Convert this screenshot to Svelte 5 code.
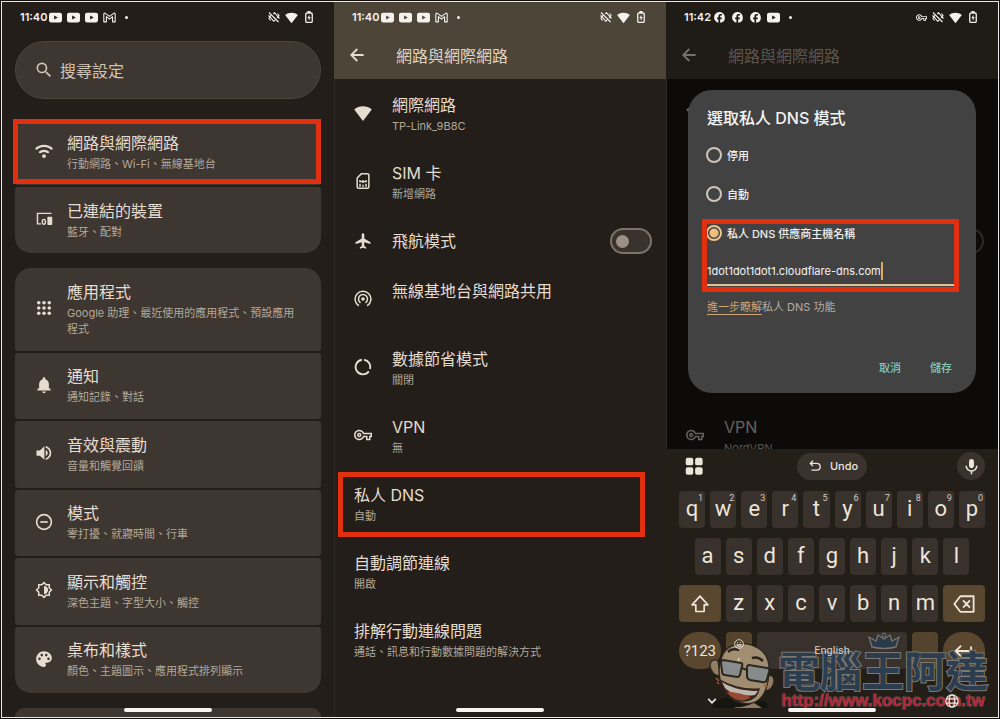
<script>
  const icons = {
    search: '<path d="M15.5 14h-.79l-.28-.27A6.47 6.47 0 0 0 16 9.5 6.5 6.5 0 1 0 9.5 16c1.61 0 3.09-.59 4.23-1.57l.27.28v.79l5 4.99L20.49 19l-4.99-5zm-6 0a4.5 4.5 0 1 1 0-9 4.5 4.5 0 0 1 0 9z"/>',
    wifiArcs: '<g fill="none" stroke="currentColor" stroke-width="2.8"><path d="M1 9.800a15.500 15.500 0 0 1 22 0"/><path d="M5.600 14.400a9.200 9.200 0 0 1 12.800 0"/></g><circle cx="12" cy="18.800" r="2.600"/>',
    devices: '<g fill="none" stroke="currentColor" stroke-width="1.900"><path d="M22 4.500H3.300V18.500H8"/><rect x="9.800" y="12.500" width="4" height="6.600" rx="2"/></g><rect x="16.500" y="9" width="6.500" height="11" rx="1"/>',
    apps: '<circle cx="5" cy="5" r="2.400"/><circle cx="12" cy="5" r="2.400"/><circle cx="19" cy="5" r="2.400"/><circle cx="5" cy="12" r="2.400"/><circle cx="12" cy="12" r="2.400"/><circle cx="19" cy="12" r="2.400"/><circle cx="5" cy="19" r="2.400"/><circle cx="12" cy="19" r="2.400"/><circle cx="19" cy="19" r="2.400"/>',
    bell: '<path d="M12 23c1.300 0 2.300-1 2.300-2.200H9.700C9.700 22 10.700 23 12 23zm6.500-6.500V11c0-3.300-1.800-6-4.700-6.800V3.500C13.800 2.500 13 1.800 12 1.800s-1.800.7-1.800 1.700v.7C7.300 5 5.500 7.700 5.500 11v5.500H3.300v2.700h17.400v-2.700z"/>',
    volume: '<path d="M2 8.500v7h4.500l6 5.500V3l-6 5.500zm15 3.500c0-1.800-1-3.300-2.700-4v8c1.600-.7 2.700-2.200 2.700-4zM14.300 2.700v2.300c3 .9 5.200 3.700 5.200 7s-2.200 6.100-5.200 7v2.300c4.200-1 7.400-4.700 7.400-9.300s-3.200-8.300-7.400-9.300z"/>',
    modes: '<circle cx="12" cy="12" r="9.800" fill="none" stroke="currentColor" stroke-width="2.200"/><path d="M7 10.900h10v2.200H7z"/>',
    display: '<path d="M20 8.690V4h-4.690L12 .69 8.690 4H4v4.690L.69 12 4 15.310V20h4.690L12 23.310 15.310 20H20v-4.690L23.310 12 20 8.690zm-2 5.790V18h-3.520L12 20.480 9.520 18H6v-3.520L3.520 12 6 9.520V6h3.520L12 3.520 14.480 6H18v3.520L20.480 12 18 14.480zM12 6.500v11a5.500 5.500 0 0 0 0-11z"/>',
    palette: '<path fill-rule="evenodd" d="M12 1.500C6.200 1.500 1.500 6.200 1.500 12S6.200 22.500 12 22.500c1.400 0 2.600-1.100 2.600-2.600 0-.7-.3-1.300-.7-1.700v-.4c0-.4.300-.8.700-.8H16.300c3.500 0 6.200-2.800 6.200-6.200 0-5.100-4.700-9.300-10.500-9.300zM6 13.500a1.700 1.700 0 1 1 0-3.400 1.700 1.700 0 0 1 0 3.400zM9 8.500a1.700 1.700 0 1 1 0-3.400 1.700 1.700 0 0 1 0 3.400zM15 8.500a1.700 1.700 0 1 1 0-3.400 1.700 1.700 0 0 1 0 3.400zM18 13.500a1.700 1.700 0 1 1 0-3.400 1.700 1.700 0 0 1 0 3.400z"/>',
    wifi: '<path d="M12 22.500.3 7.300C3.500 4.600 7.500 3 12 3s8.500 1.600 11.700 4.300z"/>',
    sim: '<path d="M10 2.200 4.200 8v11.800c0 1.100.8 1.900 1.900 1.900h11.800c1.100 0 1.900-.8 1.900-1.900V4.100c0-1.100-.8-1.900-1.900-1.900z" fill="none" stroke="currentColor" stroke-width="2"/><path d="M7 10.500h2v3H7zM7 15.500h2v4H7zM11 10.500h2v4h-2zM11 17h2v2.500h-2zM15 10.500h2v3h-2zM15 15.500h2v4h-2zM9 12h6v1.500H9z"/>',
    plane: '<path d="M22 16v-2.200l-8.300-5V3.300c0-1-.8-1.800-1.700-1.800s-1.700.8-1.700 1.800v5.500l-8.300 5V16l8.300-2.500v5.200l-2.500 1.700v1.800L12 21l4.200 1.200v-1.800l-2.500-1.700v-5.200z"/>',
    hotspot: '<g fill="none" stroke="currentColor" stroke-width="2"><path d="M6.500 21a10.500 10.500 0 1 1 11 0"/><path d="M8.700 17a6 6 0 1 1 6.600 0"/></g><circle cx="12" cy="12" r="2.400"/>',
    saver: '<g fill="none" stroke="currentColor" stroke-width="2.500"><path d="M13.500 2.300a9.800 9.800 0 0 1 7.800 12.500"/><path d="M19.800 17.900a9.800 9.800 0 1 1-9.300-15.600"/></g>',
    key: '<path d="M22 19h-6v-4h-2.680C12.180 17.420 9.720 19 7 19c-3.860 0-7-3.140-7-7s3.140-7 7-7c2.720 0 5.170 1.580 6.320 4H24v6h-2zm-4-2h2v-4h2v-2H11.940l-.23-.67C11.010 8.340 9.110 7 7 7c-2.760 0-5 2.240-5 5s2.240 5 5 5c2.110 0 4.010-1.340 4.710-3.330l.23-.67H18zM7 15c-1.650 0-3-1.350-3-3s1.350-3 3-3 3 1.350 3 3-1.350 3-3 3zm0-4c-.55 0-1 .45-1 1s.45 1 1 1 1-.45 1-1-.45-1-1-1z"/>',
    back: '<path d="M22 10.600H6.800l6.600-6.600L11.500 2 1.500 12l10 10 1.900-2-6.600-6.600H22z"/>',
    youtube: '<path fill-rule="evenodd" d="M4 3h16c2.300 0 4 1.600 4 4v10c0 2.400-1.700 4-4 4H4c-2.300 0-4-1.600-4-4V7c0-2.400 1.700-4 4-4zm5.500 5.200v7.600l6.800-3.800z"/>',
    gmail: '<path fill="none" stroke="currentColor" stroke-width="2" stroke-linejoin="round" d="M1.500 20V5.500c0-1.500 1.700-2 2.800-1.200L12 10l7.700-5.700c1.100-.8 2.800-.3 2.800 1.200V20h-4.800v-9.500L12 15l-5.700-4.500V20z"/>',
    facebook: '<path transform="translate(2 2) scale(.83)" d="M24 12a12 12 0 1 0-14.400 11.800v-8H6.700V12h2.900v-2.300c0-3.700 1.800-5.500 5.200-5.500.9 0 1.900.1 2.700.3v3.300h-1.700c-1.700 0-2.300.7-2.300 2.100V12h3.900l-.8 3.800h-3.100V24A12 12 0 0 0 24 12z"/>',
    mute: '<g fill="none" stroke="currentColor" stroke-width="2.200"><path d="M2 3l19 19"/><path d="M1 9l3 3-2 3 3 4M23 15l-3-3 2-3-3-4"/><path d="M10.500 5.500 13 3.500l7 8-2 2.500M6 9l-2.500 2 8 9.500 3-2.500"/></g>',
    battery: '<path d="M9 0h6v4H9z"/><rect x="5.500" y="4" width="13" height="18.800" rx="2.500" fill="none" stroke="currentColor" stroke-width="2.600"/><path d="M12.800 7.500 8.500 14.500h3v5l4.200-7h-2.900z"/>',
    undo: '<path fill="none" stroke="currentColor" stroke-width="2.300" d="M8.500 3 4 7.500 8.500 12M4 7.500h11a5.800 5.800 0 0 1 0 11.700H6"/>',
    mic: '<rect x="8.500" y="1.500" width="7" height="13" rx="3.500"/><path d="M4.500 11a7.500 7.500 0 0 0 15 0M12 18.500V23" fill="none" stroke="currentColor" stroke-width="2.200"/>',
    tiles: '<rect x="1" y="1" width="10" height="10" rx="2.500"/><rect x="13.500" y="1" width="10" height="10" rx="2.500"/><rect x="1" y="13.500" width="10" height="10" rx="2.500"/><rect x="13.500" y="13.500" width="10" height="10" rx="2.500"/>',
    shift: '<path fill="none" stroke="currentColor" stroke-width="2" stroke-linejoin="round" d="M12 2.500 2.500 13H7v8h10v-8h4.500z"/>',
    erase: '<path fill="none" stroke="currentColor" stroke-width="2" stroke-linejoin="round" d="M8 3.500h14.500v17H8L1.500 12zM11 8l7.500 8M18.500 8 11 16"/>',
    enter: '<path fill="none" stroke="currentColor" stroke-width="2.300" d="M8.500 5.500 2 12l6.500 6.500M2 12h18.500V6.500"/>',
    chevron: '<path fill="none" stroke="currentColor" stroke-width="4" d="M3 7l9 9.500L21 7"/>',
    globe: '<g fill="none" stroke="currentColor" stroke-width="2.200"><circle cx="12" cy="12" r="10.500"/><ellipse cx="12" cy="12" rx="4.700" ry="10.500"/><path d="M2 8.500h20M2 15.500h20"/></g>',
    smile: '<g fill="none" stroke="currentColor" stroke-width="2"><circle cx="12" cy="12" r="10.500"/><path d="M6.500 13.500c1.500 5.500 9.500 5.500 11 0z"/></g><circle cx="8.500" cy="9" r="1.500"/><circle cx="15.500" cy="9" r="1.500"/>'
  };

  const nearby = [
    { icon: 'wifiArcs', title: '網路與網際網路', sub: '行動網路、Wi-Fi、無線基地台', marked: true },
    { icon: 'devices', title: '已連結的裝置', sub: '藍牙、配對' }
  ];
  const device = [
    { icon: 'apps', title: '應用程式', sub: 'Google 助理、最近使用的應用程式、預設應用程式' },
    { icon: 'bell', title: '通知', sub: '通知記錄、對話' },
    { icon: 'volume', title: '音效與震動', sub: '音量和觸覺回饋' },
    { icon: 'modes', title: '模式', sub: '零打擾、就寢時間、行車' },
    { icon: 'display', title: '顯示和觸控', sub: '深色主題、字型大小、觸控' },
    { icon: 'palette', title: '桌布和樣式', sub: '顏色、主題圖示、應用程式排列顯示' }
  ];
  const network = [
    { icon: 'wifi', title: '網際網路', sub: 'TP-Link_9B8C' },
    { icon: 'sim', title: 'SIM 卡', sub: '新增網路' },
    { icon: 'plane', title: '飛航模式', toggle: true },
    { icon: 'hotspot', title: '無線基地台與網路共用', sub: '' },
    { icon: 'saver', title: '數據節省模式', sub: '關閉' },
    { icon: 'key', title: 'VPN', sub: '無' },
    { title: '私人 DNS', sub: '自動', marked: true },
    { title: '自動調節連線', sub: '開啟' },
    { title: '排解行動連線問題', sub: '通話、訊息和行動數據問題的解決方式' }
  ];
  const modes = ['停用', '自動', '私人 DNS 供應商主機名稱'];

  let airplane = $state(false);
  let mode = $state(2);
  let host = $state('1dot1dot1dot1.cloudflare-dns.com');
</script>

{#snippet icon(name, size)}
  <svg class="icon" viewBox="0 0 24 24" width={size} height={size} fill="currentColor" aria-hidden="true">{@html icons[name]}</svg>
{/snippet}

{#snippet status(time, left, vpn)}
  <div class="status">
    <span class="time">{time}</span>
    {#each left as name}{@render icon(name, 13)}{/each}
    <i class="dot"></i>
    <span class="right">
      {#if vpn}{@render icon('key', 11)}{/if}
      {@render icon('mute', 12)}
      {@render icon('wifi', 13)}
      {@render icon('battery', 12)}
    </span>
  </div>
{/snippet}

{#snippet cards(items)}
  <div class="group">
    {#each items as item}
      <button class="card">
        {@render icon(item.icon, 18)}
        <span class="text">
          <span class="title">{item.title}</span>
          <span class="sub">{item.sub}</span>
        </span>
        {#if item.marked}<i class="mark"></i>{/if}
      </button>
    {/each}
  </div>
{/snippet}

<div class="sheet">
  <section class="phone home">
    {@render status('11:40', ['youtube', 'youtube', 'youtube', 'gmail'], false)}
    <button class="search">{@render icon('search', 20)}<span>搜尋設定</span></button>
    {@render cards(nearby)}
    {@render cards(device)}
    <div class="peek"></div>
    <i class="pill"></i>
  </section>

  <section class="phone">
    <header class="top">
      {@render status('11:40', ['youtube', 'youtube', 'youtube', 'gmail'], false)}
      <div class="bar">
        <button class="plain" aria-label="返回">{@render icon('back', 16)}</button>
        <h1>網路與網際網路</h1>
      </div>
    </header>
    <div class="list">
      {#each network as item}
        {#if item.toggle}
          <label class="row single">
            {@render icon(item.icon, 18)}
            <span class="title">{item.title}</span>
            <input type="checkbox" role="switch" class="switch" bind:checked={airplane} />
          </label>
        {:else}
          <button class="row">
            {#if item.icon}{@render icon(item.icon, 18)}{/if}
            <span class="text">
              <span class="title">{item.title}</span>
              <span class="sub">{item.sub}</span>
            </span>
            {#if item.marked}<i class="mark"></i>{/if}
          </button>
        {/if}
      {/each}
    </div>
    <i class="pill"></i>
  </section>

  <section class="phone dim">
    <header class="top">
      {@render status('11:42', ['facebook', 'facebook', 'facebook', 'youtube'], true)}
      <div class="bar">
        <button class="plain" aria-label="返回">{@render icon('back', 16)}</button>
        <h1>網路與網際網路</h1>
      </div>
    </header>
    <div class="stage">
      <div class="behind list">
        <div class="row">{@render icon('wifi', 18)}</div>
        <div class="row"></div>
        <div class="row single"><i class="switch"></i></div>
        <div class="row"></div>
        <div class="row"></div>
        <div class="row">
          {@render icon('key', 18)}
          <span class="text"><span class="title">VPN</span><span class="sub">NordVPN</span></span>
        </div>
      </div>
      <form class="dialog" onsubmit={(e) => e.preventDefault()}>
        <h2>選取私人 DNS 模式</h2>
        {#each modes.slice(0, 2) as name, i}
          <label class="choice"><input type="radio" name="mode" value={i} bind:group={mode} />{name}</label>
        {/each}
        <div class="provider">
          <label class="choice"><input type="radio" name="mode" value={2} bind:group={mode} />{modes[2]}</label>
          <div class="field"><input type="text" aria-label={modes[2]} spellcheck="false" bind:value={host} /><i class="caret"></i></div>
          <i class="mark"></i>
        </div>
        <p class="help"><a href="#dns">進一步瞭解</a>私人 DNS 功能</p>
        <div class="actions">
          <button type="button">取消</button>
          <button type="submit">儲存</button>
        </div>
      </form>
    </div>

    <div class="keyboard">
      <div class="tools">
        <button class="menu" aria-label="選單">{@render icon('tiles', 18)}</button>
        <button class="undo">{@render icon('undo', 14)}Undo</button>
        <button class="mic" aria-label="語音輸入">{@render icon('mic', 17)}</button>
      </div>
      <div class="keys">
        {#each 'qwertyuiop' as k, i}
          <button class="k">{k}<sup>{(i + 1) % 10}</sup></button>
        {/each}
        {#each 'asdfghjkl' as k, i}
          <button class="k" class:inset={i === 0}>{k}</button>
        {/each}
        <button class="k wide newline" aria-label="Shift">{@render icon('shift', 20)}</button>
        {#each 'zxcvbnm' as k}
          <button class="k">{k}</button>
        {/each}
        <button class="k wide" aria-label="Backspace">{@render icon('erase', 22)}</button>
        <button class="k wide round">?123</button>
        <button class="k accent emoji"><span>{@render icon('smile', 10)}</span><span>,</span></button>
        <button class="k space"><span>English</span></button>
        <button class="k accent" aria-label="Period"></button>
        <button class="k wide round" aria-label="Enter">{@render icon('enter', 20)}</button>
      </div>
      <div class="foot">
        <button class="plain" aria-label="收起鍵盤">{@render icon('chevron', 10)}</button>
        <button class="plain" aria-label="語言">{@render icon('globe', 14)}</button>
      </div>

      <div class="brand">
        <svg class="face" viewBox="0 0 70 70" width="70" height="70" aria-hidden="true">
          <path d="M3 69q3-8 14-10l34 2q9 1 10 8z" fill="#17150f"/>
          <g stroke="#2b261f" stroke-width="1.300">
            <path d="M10 22c-7-4-10 4-6 10 2 4 5 5 8 4zM57 39c6-6 11-1 8 7-2 5-7 7-10 4z" fill="#9b8468"/>
            <path d="M13 20C17 4 36 1 50 9c10 6 13 16 10 33-3 17-12 25-26 22C16 61 7 38 13 20z" fill="#a89377"/>
            <path d="M15 21l18 3q2 0 1 3l-2 9q-1 2-3 2l-12-2q-3 0-3-4l-1-8q0-3 2-3zM41 26l18 3q3 0 2 4l-2 7q-1 4-5 3l-12-2q-3-1-3-4v-8q0-3 2-3z" fill="#8f9294" stroke-width="2"/>
            <path d="M34 29l5 2" fill="none" stroke-width="2"/>
            <path d="M12 41c12 7 26 10 39 9-2 10-12 14-23 11-9-3-15-12-16-20z" fill="#4b2018"/>
            <path d="M14 43c11 7 24 9 36 9l-3 4C34 58 23 55 17 49z" fill="#c5c1b7" stroke="none"/>
            <path d="M19 53c9 0 17 2 24 5-7 6-18 4-24-5z" fill="#a04c36" stroke="none"/>
            <path d="M20 13q4-4 11-2M44 19q6-2 11 3" fill="none" stroke-width="2.500"/>
          </g>
          <path d="M8 39l3 3M9 43l2 2M56 46l4 2" stroke="#a1603f" stroke-width="1.500"/>
          <path d="M26 68q9 1 20-4l8 5H28z" fill="#958064"/>
        </svg>
        <div class="words">
          <svg class="crown" viewBox="0 0 34 18" width="34" height="18" aria-hidden="true">
            <path d="M5 15 2 5l7 4 2-6 6 4 6-4 2 6 7-4-3 10q-12 3-24 0z" fill="#2b3a48" stroke="#77746f" stroke-width="1.300"/>
            <circle cx="17" cy="3" r="2" fill="#2b3a48" stroke="#77746f"/>
          </svg>
          <strong>電腦王阿達</strong>
          <span>http://www.kocpc.com.tw</span>
        </div>
      </div>
    </div>
    <i class="pill"></i>
  </section>
</div>

<style>
  :global(body) { margin: 0; background: #15120f; }
  .sheet {
    box-sizing: border-box;
    min-height: calc(100vh - 2px);
    margin: 1px;
    border: 1px solid #e8e8e8;
    display: grid;
    grid-template-columns: repeat(3, minmax(0, 1fr));
    font-family: Inter, "Noto Sans CJK TC", sans-serif;
    color: #e6dccf;
    background: #231e19;
  }
  button { font: inherit; color: inherit; background: none; border: 0; padding: 0; margin: 0; text-align: left; }
  h1, h2, p { margin: 0; font-weight: 400; }
  .icon { display: block; flex: none; }

  .phone {
    position: relative;
    display: flex;
    flex-direction: column;
    box-sizing: border-box;
    overflow: hidden;
    background: #231e19;
  }
  .phone + .phone { box-shadow: inset 1px 0 #2e2a28; }
  .status {
    height: 30px;
    padding: 0 19px 0 18px;
    display: flex;
    align-items: center;
    gap: 5px;
    color: #f5f2ee;
  }
  .time { font-size: 11px; font-weight: 600; margin-right: -3px; }
  .dot { width: 3px; height: 3px; margin-left: 4px; border-radius: 50%; background: currentColor; }
  .right { margin-left: auto; display: flex; align-items: center; gap: 5px; }
  .pill {
    position: absolute;
    bottom: 5px;
    left: 50%;
    width: 88px;
    height: 4px;
    margin-left: -44px;
    border-radius: 2px;
    background: #f7f4f1;
  }
  .mark { position: absolute; border: 5px solid #e0300f; pointer-events: none; }

  .home { padding: 0 13px; gap: 15px; }
  .home .status { margin: 0 -13px -6px; }
  .search {
    height: 58px;
    box-sizing: border-box;
    margin-bottom: 5px;
    padding: 0 17px 0 18px;
    display: flex;
    align-items: center;
    gap: 6px;
    border: 1px solid #4b443c;
    border-radius: 29px;
    background: #3e3630;
    font-size: 16px;
    color: #cfc4b6;
  }
  .group { display: flex; flex-direction: column; gap: 2px; }
  .group + .group { flex: 1; }
  .card {
    position: relative;
    flex: 1 1 auto;
    min-height: 66px;
    padding: 11px 20px 13px;
    box-sizing: border-box;
    display: flex;
    align-items: center;
    gap: 14px;
    border-radius: 3px;
    background: #3e3630;
  }
  .card:first-child { border-radius: 16px 16px 3px 3px; }
  .card:last-child { border-radius: 3px 3px 16px 16px; }
  .card .mark { inset: 0 0 1px -2px; }
  .text { display: flex; flex-direction: column; gap: 1px; }
  .title { font-size: 16px; line-height: 24px; }
  .sub { min-height: 16px; font-size: 11px; line-height: 16px; color: #b3a899; }
  .peek { height: 9px; border-radius: 16px 16px 0 0; background: #3e3630; }

  .top { height: 77px; background: #4e4539; }
  .bar { height: 47px; padding: 0 15px 2px; box-sizing: border-box; display: flex; align-items: center; gap: 31px; }
  .bar h1 { font-size: 16px; color: #ded3c6; }
  .list { padding: 2px 0; display: flex; flex-direction: column; }
  .row {
    position: relative;
    box-sizing: border-box;
    height: 68px;
    flex: none;
    padding: 0 14px 4px 20px;
    display: flex;
    align-items: center;
    gap: 20px;
  }
  .single { height: 50px; padding-bottom: 2px; }
  .row .mark { inset: 1px 21px 2px 4px; }
  .switch {
    appearance: none;
    box-sizing: border-box;
    width: 42px;
    height: 26px;
    margin: 0 0 0 auto;
    border: 2px solid #7d7368;
    border-radius: 13px;
    background: #3a322d;
    display: flex;
    align-items: center;
    padding: 0 4px;
  }
  .switch::before { content: ""; width: 13px; height: 13px; border-radius: 50%; background: #9b9084; }
  .switch:checked { justify-content: flex-end; }

  .dim { background: #0d0b0a; }
  .dim .top { background: #1f1b17; }
  .dim .bar { color: #77716b; }
  .dim .bar h1 { color: #5d5650; }
  .stage { position: relative; flex: 1; overflow: hidden; padding: 11px 22px 56px; }
  .behind { position: absolute; inset: 0; color: #67625d; }
  .behind .sub { color: #5a5550; }
  .behind .switch { background: none; border-color: #2d2925; }
  .behind .switch::before { display: none; }
  .dialog {
    position: relative;
    box-sizing: border-box;
    min-height: 303px;
    padding: 15px 17px 14px 19px;
    display: flex;
    flex-direction: column;
    border-radius: 24px;
    background: #424242;
  }
  h2 { font-size: 16px; line-height: 26px; font-weight: 500; color: #f4f4f4; margin-bottom: 4px; }
  .choice { height: 39px; display: flex; align-items: center; gap: 5px; font-size: 11px; font-weight: 500; color: #eee; }
  .choice input {
    appearance: none;
    box-sizing: border-box;
    width: 16px;
    height: 16px;
    margin: 0 0 0 -1px;
    border: 2px solid #cfc6bb;
    border-radius: 50%;
  }
  .choice input:checked { border-color: #edc48c; background: radial-gradient(#f0be7e 4px, transparent 5px); }
  .provider { position: relative; }
  .provider .mark { inset: 6px 0 -6px -5px; }
  .field {
    height: 34px;
    padding-top: 6px;
    box-sizing: border-box;
    display: flex;
    align-items: center;
    border-bottom: 2px solid #e3c193;
  }
  .field input { field-sizing: content; padding: 0; border: 0; background: none; color: #f4f4f4; font: inherit; font-size: 11px; outline: 0; }
  .caret { width: 2px; height: 18px; background: #d9a868; }
  .help { margin-top: 12px; font-size: 11px; line-height: 18px; color: #b5aea6; }
  .help a { color: #cda374; text-decoration: underline; text-underline-offset: 3px; }
  .actions { margin-top: auto; padding-right: 7px; display: flex; justify-content: flex-end; gap: 29px; font-size: 11px; line-height: 22px; font-weight: 500; color: #80c9bf; }

  .keyboard { position: relative; height: 268px; box-sizing: border-box; padding: 3px 13px 0; background: #241e18; color: #eee5da; }
  .tools { display: grid; grid-template-columns: 1fr auto 1fr; align-items: center; height: 28px; }
  .menu { padding-left: 6px; }
  .undo { height: 27px; padding: 0 9px 0 11px; display: flex; align-items: center; gap: 8px; border-radius: 14px; background: #39322d; font-size: 11px; font-weight: 500; }
  .mic { justify-self: end; width: 28px; height: 28px; display: grid; place-items: center; border-radius: 50%; background: #39322d; }
  .keys { margin-top: 11px; display: grid; grid-template-columns: repeat(20, minmax(0, 1fr)); gap: 10px 5px; }
  .k {
    position: relative;
    grid-column: span 2;
    height: 37px;
    box-sizing: border-box;
    display: flex;
    align-items: center;
    justify-content: center;
    padding-bottom: 2px;
    border-radius: 4px;
    background: #38312c;
    font-family: Roboto, sans-serif;
    font-size: 22px;
  }
  .k sup { position: absolute; top: 2px; right: 2px; font-size: 9px; line-height: 10px; color: #d6cdc3; }
  .inset { grid-column: 2 / span 2; }
  .wide { grid-column: span 3; background: #59472f; padding: 0; }
  .newline { grid-column: 1 / span 3; }
  .accent { background: #54442e; }
  .round { border-radius: 19px; font-size: 15px; }
  .space { grid-column: span 10; font-size: 11px; padding: 0; color: #d9cfc4; }
  .emoji { flex-direction: column; font-size: 12px; line-height: 12px; gap: 0; }
  .k span { position: relative; z-index: 1; }
  .foot { position: relative; z-index: 1; display: flex; justify-content: space-between; align-items: center; padding: 0 26px 0 28px; height: 28px; margin-top: 18px; }
  .brand { position: absolute; right: 10px; bottom: 6px; display: flex; align-items: flex-end; pointer-events: none; }
  .face { display: block; margin-bottom: 2px; opacity: 0.94; }
  .words { position: relative; display: flex; flex-direction: column; align-items: center; }
  .crown { position: absolute; top: -15px; left: 50%; margin-left: -16px; }
  .words strong {
    font-family: "Noto Sans CJK TC", sans-serif;
    font-size: 42px;
    line-height: 44px;
    font-weight: 700;
    color: #2b3d4e;
    -webkit-text-stroke: 2px #7b7872;
    paint-order: stroke fill;
  }
  .words span {
    font-family: "Liberation Sans", sans-serif;
    font-size: 17px;
    line-height: 20px;
    font-weight: 700;
    color: #b3263a;
    -webkit-text-stroke: 1px #6a5550;
    paint-order: stroke fill;
  }
</style>
